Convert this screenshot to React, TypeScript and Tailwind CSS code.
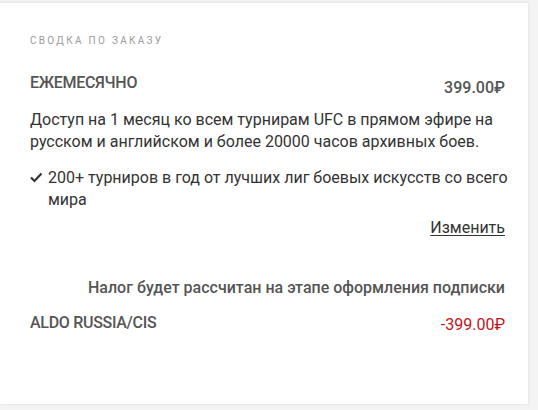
export default function App() {
  return (
    <div className="w-[538px] h-[410px] bg-[#f4f4f4] overflow-hidden font-['Roboto',sans-serif]">
      <div className="w-[528px] h-[401px] mt-[3px] bg-white shadow-[0_0_3px_rgba(0,0,0,0.12)] pl-[30px] pr-[23px] pt-[30px]">
        <div className="text-[10px] tracking-[2.3px] text-[#9a9a9a] leading-[16px]">СВОДКА ПО ЗАКАЗУ</div>

        <div className="mt-[24px] flex justify-between items-start">
          <div className="text-[16px] font-medium text-[#555] tracking-[-0.3px] leading-[20px]">ЕЖЕМЕСЯЧНО</div>
          <div className="mt-[5px] text-[16px] font-medium text-[#555] leading-[20px]">399.00₽</div>
        </div>

        <p className="mt-[11px] text-[16px] leading-[22px] text-[#333]">
          Доступ на 1 месяц ко всем турнирам UFC в прямом эфире на русском и английском и более 20000 часов архивных боев.
        </p>

        <div className="mt-[14px] -mr-[4px] flex gap-[5px] text-[16px] leading-[22px] text-[#333]">
          <svg width="13" height="22" viewBox="0 0 13 22" className="shrink-0">
            <path d="M1 10.5 L4.5 14 L11.5 6.5" fill="none" stroke="#333" strokeWidth="2.2" />
          </svg>
          <span>200+ турниров в год от лучших лиг боевых искусств со всего мира</span>
        </div>

        <div className="mt-[6px] flex justify-end">
          <a className="text-[16px] leading-[22px] text-[#333] underline underline-offset-2">Изменить</a>
        </div>

        <div className="mt-[38px] flex justify-end text-[16px] font-medium text-[#555] leading-[22px]">
          Налог будет рассчитан на этапе оформления подписки
        </div>

        <div className="mt-[14px] flex justify-between items-start">
          <div className="text-[16px] font-medium text-[#555] leading-[20px] tracking-[-0.3px]">ALDO RUSSIA/CIS</div>
          <div className="mt-[2px] text-[16px] text-[#c0141c] leading-[20px]">-399.00₽</div>
        </div>
      </div>
    </div>
  );
}
